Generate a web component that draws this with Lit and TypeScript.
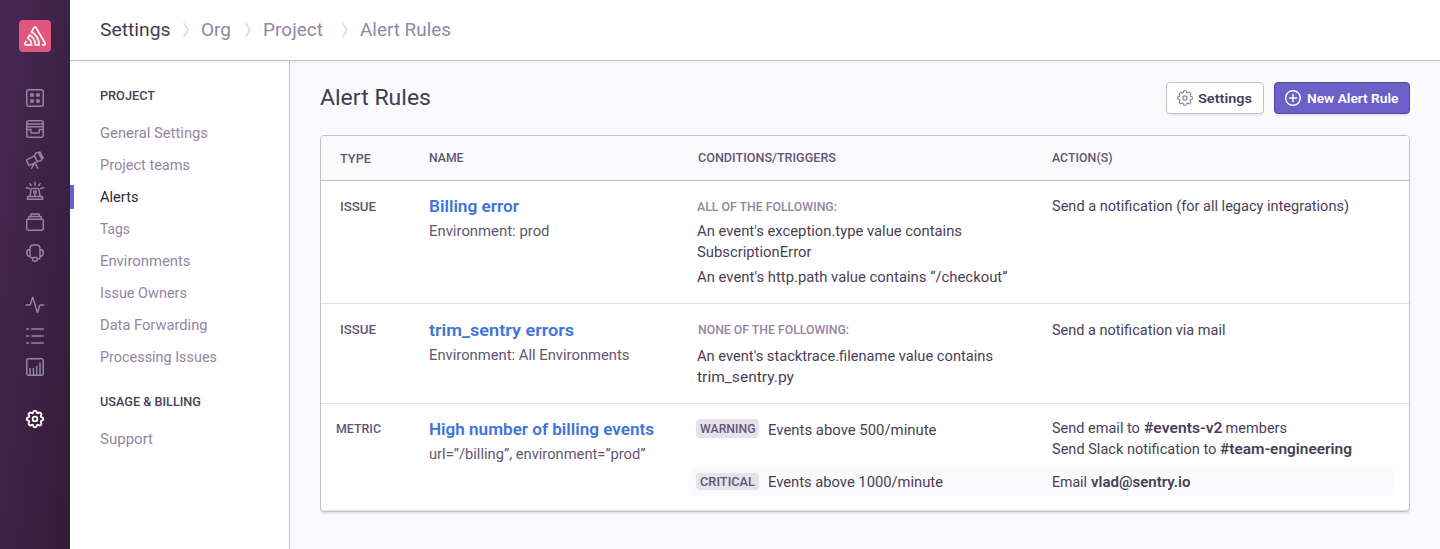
import { LitElement, html, css, svg } from "lit";
import { customElement, property } from "lit/decorators.js";

/** A single line of text stretched horizontally so that it fills `w` pixels. */
@customElement("fit-line")
export class FitLine extends LitElement {
  @property({ type: Number }) w = 0;

  static styles = css`
    :host { display: block; white-space: nowrap; }
    span { display: inline-block; white-space: pre; vertical-align: top; transform-origin: 0 50%; }
  `;

  render() {
    return html`<span><slot @slotchange=${this.fit}></slot></span>`;
  }

  firstUpdated() {
    this.fit();
  }

  private fit() {
    const span = this.renderRoot.querySelector("span");
    if (!span || !this.w) return;
    this.style.width = `${this.w}px`;
    span.style.transform = "none";
    const natural = span.getBoundingClientRect().width;
    if (natural) span.style.transform = `scaleX(${(this.w / natural).toFixed(4)})`;
  }
}

/** Outline of a cog with eight rounded teeth, centred in a 16px box. */
function cog(outer: number, inner: number): string {
  const at = (r: number, deg: number) => {
    const a = (deg * Math.PI) / 180;
    return `${(8 + r * Math.cos(a)).toFixed(2)} ${(8 + r * Math.sin(a)).toFixed(2)}`;
  };
  let d = `M${at(inner, -17)}`;
  for (let i = 0; i < 8; i++) {
    const c = i * 45;
    d += `L${at(outer - 0.5, c - 11)}Q${at(outer, c - 10)} ${at(outer, c - 5)}L${at(outer, c + 5)}`;
    d += `Q${at(outer, c + 10)} ${at(outer - 0.5, c + 11)}L${at(inner, c + 17)}Q${at(inner - 0.5, c + 22.5)} ${at(inner, c + 28)}`;
  }
  return d + "z";
}

const gear = svg`<path d=${cog(7.3, 5.8)}/><circle cx="8" cy="8" r="2.1"/>`;

const icons = {
  projects: svg`<rect x=".75" y=".75" width="16.5" height="16.5" rx="2"/>
    <g class="solid"><rect x="4.2" y="4.2" width="3.6" height="3.6" rx=".6"/><rect x="10.2" y="4.2" width="3.6" height="3.6" rx=".6"/><rect x="4.2" y="10.2" width="3.6" height="3.6" rx=".6"/><rect x="10.2" y="10.2" width="3.6" height="3.6" rx=".6"/></g>`,
  issues: svg`<rect x=".75" y=".75" width="16.5" height="16.5" rx="2"/>
    <path d="M.8 3.9h16.4M.8 6.7h16.4M.8 9.6h4v2.6q0 .9.9.9h6.6q.9 0 .9-.9V9.6h4"/>`,
  discover: svg`<path d="M1.1 8.6 8.5 4.9l2.9 5.7L4 14.2q-.9.4-1.3-.4L.8 9.9q-.4-.9.3-1.3zM8.5 4.9l1-2.6 4.4-1.4 3.1 6-2.2 2.9-3.4.8M12.7 1.4q.4 3 3.6 6.5M8.2 12.6l-2.5 4.6M9.2 12.4l2.5 4.8"/>`,
  alerts: svg`<path d="M1.4 17.2v-1.9q0-.8.8-.8h13.6q.8 0 .8.8v1.9zM4 14.4l.9-6.6q.2-1.4 1.6-1.4h5q1.4 0 1.6 1.4l.9 6.6M9 11.6v2.8M9 .5v2.8M3.9 1.6l1.3 2M14.1 1.6l-1.3 2M.3 5.7l2.9.8M17.7 5.7l-2.9.8"/><circle cx="9" cy="10.1" r="1.4"/>`,
  releases: svg`<rect x=".75" y="6.2" width="16.5" height="11" rx="1.4"/><path d="M2.7 6.1V4.4q0-.8.8-.8h11q.8 0 .8.8v1.7M4.7 3.5V1.8q0-.8.8-.8h7q.8 0 .8.8v1.7"/>`,
  feedback: svg`<path d="M4 12.4V4.6Q4 1 7.6 1h2.8Q14 1 14 4.6v7.8M4 5.8H2.8Q.8 6 .8 9t2 3.2H4M14 5.8h1.2q2 .2 2 3.2t-2 3.2H14M4 12.4q.2 1.4 2.6 1.6M14 12.4v1q0 1.6-1.6 1.6h-1"/><rect x="6.6" y="13.6" width="4.7" height="3.4" rx=".9"/>`,
  activity: svg`<path d="M.3 9h3.3q.6 0 .8-.6L6.5 1.6q.2-.4.4 0l4.4 14.8q.2.4.4 0l1.9-6.8q.2-.6.8-.6h3.3"/>`,
  stats: svg`<path d="M.7 2h1.9M5.7 2h11.6M.7 9h1.9M5.7 9h11.6M.7 16h1.9M5.7 16h11.6"/>`,
  dashboards: svg`<rect x=".75" y=".75" width="16.5" height="16.5" rx="2"/><path d="M4 16.8v-6.2M7.4 16.8v-6.2M10.7 16.8V8.4M14 16.8V4.9"/>`,
};

const trail = [
  { label: "Settings", w: 70.5, cls: "c1" },
  { label: "Org", w: 30, cls: "c2" },
  { label: "Project", w: 60, cls: "c3" },
  { label: "Alert Rules", w: 91, cls: "c4" },
];

const projectLinks: [string, number][] = [
  ["General Settings", 108],
  ["Project teams", 90],
  ["Alerts", 38.5],
  ["Tags", 30],
  ["Environments", 90.5],
  ["Issue Owners", 87],
  ["Data Forwarding", 107.5],
  ["Processing Issues", 117],
];

@customElement("app-root")
export class AppRoot extends LitElement {
  static styles = css`
    :host {
      display: grid;
      grid-template-columns: 70px 1fr;
      height: 549px;
      overflow: hidden;
      font: 400 14px/20px Roboto, "Liberation Sans", sans-serif;
      color: #4a3e56;
      background: #fff;
    }
    * { box-sizing: border-box; }
    svg { display: block; flex: none; fill: none; stroke: currentColor; stroke-width: 1.5; stroke-linejoin: round; stroke-linecap: round; overflow: visible; }
    .solid { fill: currentColor; stroke: none; }

    .rail {
      display: flex;
      flex-direction: column;
      align-items: center;
      padding-top: 20px;
      color: #9386a0;
      background: linear-gradient(97deg, #452650 0%, #452650 12%, #331c37 100%);
    }
    .logo { width: 32px; height: 32px; border-radius: 4px; background: #e1567c; color: #fff; margin-bottom: 37px; }
    .group { display: flex; flex-direction: column; gap: 13px; }
    .group svg { width: 18px; height: 18px; stroke-width: 1.5; }
    .group + .group { margin-top: 34px; }
    .group.current { color: #fff; }
    .group.current svg { stroke-width: 1.6; }

    .main { display: grid; grid-template-rows: 61px 1fr; }
    .top {
      position: relative;
      display: flex;
      align-items: center;
      height: 61px;
      padding-left: 30px;
      border-bottom: 1px solid #c6becf;
      box-shadow: 0 2px 0 rgba(37, 11, 54, 0.04);
      font-size: 18px;
      line-height: 24px;
      color: #9585a3;
    }
    .c1 { width: 83px; color: #453a50; }
    .c2 { width: 44px; }
    .c3 { width: 79px; }
    .sep { width: 6px; height: 14px; margin-right: 12px; color: #e3dce8; stroke-width: 1.9; }

    .body { display: grid; grid-template-columns: 220px 1fr; }
    .side { border-right: 1px solid #c6becf; padding-top: 25px; color: #9585a3; }
    .side h2 { margin: 0; padding-left: 30px; font-size: 12px; line-height: 20px; font-weight: 500; color: #4a3e56; }
    .side ul { list-style: none; margin: 11px 0 19px; padding: 0; }
    .side li { display: flex; align-items: center; height: 32px; padding-left: 30px; }
    .side li.on { color: #2f2936; padding-left: 0; }
    .side li.on::before { content: ""; width: 4px; height: 24px; margin-right: 26px; background: #6c5fc7; }

    .content { background: #fafafc; padding: 21px 30px 0; }
    .bar { display: flex; align-items: center; height: 32px; gap: 10px; margin-bottom: 21px; }
    .bar h1 { flex: 1; margin: 0; font-size: 22px; line-height: 30px; font-weight: 400; color: #453a50; }
    .btn {
      display: flex; align-items: center; height: 32px; padding: 0 0 0 10px;
      border: 1px solid #c6becf; border-radius: 4px; background: #fff;
      box-shadow: 0 2px 1px rgba(37, 11, 54, 0.07);
      font: 600 13px/20px Roboto, sans-serif; color: #4a3e56;
    }
    .btn fit-line { padding-top: 1px; }
    .btn svg { width: 16px; height: 16px; stroke-width: 1.2; color: #9585a3; margin-right: 5px; }
    .settings { width: 98px; }
    .new { width: 136px; background: #6c5fc7; border-color: #5346a8; color: #fff; }
    .new svg { color: #fff; stroke-width: 1.4; margin-right: 6px; }

    .panel { border: 1px solid #c6becf; border-radius: 4px; background: #fff; box-shadow: inset 0 -1px 0 #e6e1ea, 0 2px 1px rgba(37, 11, 54, 0.09); height: 377px; }
    .row { display: grid; grid-template-columns: 89px 268px 355px 1fr; padding-left: 19px; border-bottom: 1px solid #e3dfe7; }
    .head { height: 44px; padding-top: 12px; border-bottom: 0; box-shadow: 0 1px 0 #c6becf; background: #fafafc; border-radius: 3px 3px 0 0; }
    .head, .kind, .when { font-size: 12px; font-weight: 500; color: #645574; }
    .r1 { height: 123px; margin-top: 1px; padding-top: 15px; }
    .r2 { height: 100px; padding-top: 16px; }
    .r3 { padding-top: 15px; border-bottom: 0; }
    .drop { padding-top: 1px; }
    .r1 .kind { padding-top: 1px; }
    .nudge { padding-left: 1px; }
    .metric { margin-left: -4px; }
    .name { font-size: 16px; line-height: 21px; font-weight: 600; color: #3d74db; }
    .env { color: #645574; margin-top: 4px; }
    .when { color: #9585a3; }
    .text { line-height: 21px; margin-top: 4px; }
    .r2 .text { margin-top: 6px; }
    .stack { line-height: 21px; margin-top: -1px; }
    .trigger { display: grid; grid-template-columns: 72px 284px 1fr; align-items: start; padding-left: 6px; }
    .triggers { grid-column: 3 / 5; margin-left: -7px; margin-right: 15px; }
    .trigger.alt { height: 29px; margin-top: 7px; padding-top: 5px; background: #fafafc; border-radius: 4px; }
    .badge { width: 63px; height: 19px; padding-left: 4px; border-radius: 4px; background: #e7e1ec; font-size: 12px; line-height: 21px; font-weight: 500; color: #645574; }
    .alt .badge { height: 17px; line-height: 19px; margin-top: 1px; }
    .phrase { display: flex; white-space: pre; }
    b { font-weight: 600; }
  `;

  private sep() {
    return html`<svg class="sep" viewBox="0 0 6 14"><path d="M1 .8 5 7 1 13.2"/></svg>`;
  }

  private icon(shape: unknown) {
    return html`<svg viewBox="0 0 18 18">${shape}</svg>`;
  }

  private t(text: string, w: number) {
    return html`<fit-line w=${w}>${text}</fit-line>`;
  }

  render() {
    return html`
      <nav class="rail">
        <svg class="logo" viewBox="0 0 32 32"><path class="solid" transform="translate(5 4.9) scale(.92)" d="M13.91 2.505c-.873-1.448-2.972-1.448-3.844 0L6.904 7.92a15.478 15.478 0 0 1 8.53 12.811h-2.221A13.301 13.301 0 0 0 5.784 9.814l-2.926 5.06a7.65 7.65 0 0 1 4.435 5.848H2.194a.365.365 0 0 1-.298-.534l1.413-2.402a5.16 5.16 0 0 0-1.614-.913L.296 19.275a2.182 2.182 0 0 0 .812 2.999 2.24 2.24 0 0 0 1.086.288h6.983a9.322 9.322 0 0 0-3.845-8.318l1.11-1.922a11.47 11.47 0 0 1 4.95 10.24h5.915a17.242 17.242 0 0 0-7.885-15.28l2.244-3.845a.37.37 0 0 1 .504-.13c.255.14 9.75 16.708 9.928 16.9a.365.365 0 0 1-.327.543h-2.287c.029.612.029 1.223 0 1.831h2.297a2.206 2.206 0 0 0 1.922-3.31z"/></svg>
        <div class="group">
          ${[icons.projects, icons.issues, icons.discover, icons.alerts, icons.releases, icons.feedback].map((s) => this.icon(s))}
        </div>
        <div class="group">${[icons.activity, icons.stats, icons.dashboards].map((s) => this.icon(s))}</div>
        <div class="group current"><svg viewBox="0 0 16 16">${gear}</svg></div>
      </nav>
      <div class="main">
        <header class="top">
          ${trail.map((c, i) => html`${i ? this.sep() : ""}<div class=${c.cls}>${this.t(c.label, c.w)}</div>`)}
        </header>
        <div class="body">
          <aside class="side">
            <h2>${this.t("PROJECT", 55)}</h2>
            <ul>${projectLinks.map(([l, w]) => html`<li class=${l === "Alerts" ? "on" : ""}>${this.t(l, w)}</li>`)}</ul>
            <h2>${this.t("USAGE & BILLING", 101)}</h2>
            <ul><li>${this.t("Support", 53)}</li></ul>
          </aside>
          <main class="content">
            <div class="bar">
              <h1>${this.t("Alert Rules", 111)}</h1>
              <div class="btn settings"><svg viewBox="0 0 16 16">${gear}</svg>${this.t("Settings", 54)}</div>
              <div class="btn new"><svg viewBox="0 0 16 16"><circle cx="8" cy="8" r="7.3"/><path d="M8 4.5v7M4.5 8h7"/></svg>${this.t("New Alert Rule", 91.5)}</div>
            </div>
            <section class="panel">
              <div class="row head">
                <div class="drop">${this.t("TYPE", 31)}</div>
                <div>${this.t("NAME", 34.5)}</div>
                <div class="nudge">${this.t("CONDITIONS/TRIGGERS", 138)}</div>
                <div>${this.t("ACTION(S)", 60.5)}</div>
              </div>
              <div class="row r1">
                <div class="kind">${this.t("ISSUE", 36)}</div>
                <div><div class="name">${this.t("Billing error", 90)}</div><div class="env">${this.t("Environment: prod", 120.5)}</div></div>
                <div class="drop">
                  <div class="when">${this.t("ALL OF THE FOLLOWING:", 140)}</div>
                  <div class="text">${this.t("An event's exception.type value contains", 265)}${this.t("SubscriptionError", 114.5)}</div>
                  <div class="text">${this.t("An event's http.path value contains “/checkout”", 310.5)}</div>
                </div>
                <div>${this.t("Send a notification (for all legacy integrations)", 297)}</div>
              </div>
              <div class="row r2">
                <div class="kind">${this.t("ISSUE", 36)}</div>
                <div><div class="name">${this.t("trim_sentry errors", 145)}</div><div class="env">${this.t("Environment: All Environments", 200.5)}</div></div>
                <div>
                  <div class="when nudge">${this.t("NONE OF THE FOLLOWING:", 151)}</div>
                  <div class="text">${this.t("An event's stacktrace.filename value contains", 296)}${this.t("trim_sentry.py", 97)}</div>
                </div>
                <div>${this.t("Send a notification via mail", 173.5)}</div>
              </div>
              <div class="row r3">
                <div class="kind metric">${this.t("METRIC", 45)}</div>
                <div><div class="name">${this.t("High number of billing events", 225)}</div><div class="env">${this.t("url=”/billing”, environment=”prod”", 216.5)}</div></div>
                <div class="triggers">
                  <div class="trigger">
                    <div class="badge">${this.t("WARNING", 55.5)}</div>
                    <div class="drop">${this.t("Events above 500/minute", 168.5)}</div>
                    <div class="stack">
                      <div class="phrase">${this.t("Send email to ", 91.5)}<b>${this.t("#events-v2", 78.5)}</b>${this.t(" members", 65)}</div>
                      <div class="phrase">${this.t("Send Slack notification to ", 168)}<b>${this.t("#team-engineering", 132)}</b></div>
                    </div>
                  </div>
                  <div class="trigger alt">
                    <div class="badge">${this.t("CRITICAL", 55)}</div>
                    ${this.t("Events above 1000/minute", 175)}
                    <div class="phrase">${this.t("Email ", 38.5)}<b>${this.t("vlad@sentry.io", 99.5)}</b></div>
                  </div>
                </div>
              </div>
            </section>
          </main>
        </div>
      </div>`;
  }
}
